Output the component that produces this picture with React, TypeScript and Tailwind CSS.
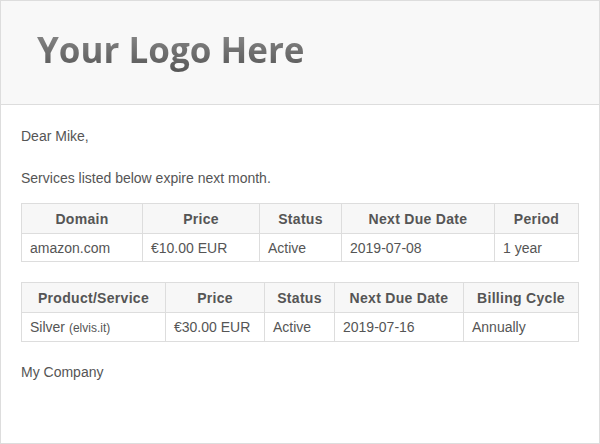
const cellBorder = "border border-[#dddddd]";

function DataTable({ widths, heads, cells, rowH }: { widths: number[]; heads: string[]; cells: React.ReactNode[]; rowH: string }) {
  return (
    <table className="w-[557px] table-fixed border-collapse text-[14px] leading-[20px] text-[#555555]">
      <colgroup>
        {widths.map((w, i) => (
          <col key={i} style={{ width: w }} />
        ))}
      </colgroup>
      <thead>
        <tr className="h-[30px] bg-[#f7f7f7]">
          {heads.map((h) => (
            <th key={h} className={`${cellBorder} p-0 text-center font-bold tracking-[0.3px] whitespace-nowrap`}>
              {h}
            </th>
          ))}
        </tr>
      </thead>
      <tbody>
        <tr className={rowH}>
          {cells.map((c, i) => (
            <td key={i} className={`${cellBorder} px-2 py-0 text-left whitespace-nowrap`}>
              {c}
            </td>
          ))}
        </tr>
      </tbody>
    </table>
  );
}

export default function App() {
  return (
    <div className="flex h-[444px] w-[600px] flex-col border border-[#dddddd] bg-white font-['Liberation_Sans',Arial,sans-serif] text-[14px] leading-[20px] text-[#555555]">
      <div className="flex h-[104px] shrink-0 items-start border-b border-[#dddddd] bg-[#f8f8f8] pl-[36px] pt-[26px]">
        <span className="bg-gradient-to-b from-[#8f8f8f] to-[#555555] bg-clip-text font-['Open_Sans',sans-serif] text-[35px] leading-[46px] font-bold text-transparent">
          Your Logo Here
        </span>
      </div>
      <div className="flex flex-col pl-[20px] pt-[21px]">
        <p>Dear Mike,</p>
        <p className="mt-[22px]">Services listed below expire next month.</p>
        <div className="mt-[15px]">
          <DataTable
            widths={[121, 117, 82, 153, 84]}
            heads={["Domain", "Price", "Status", "Next Due Date", "Period"]}
            cells={["amazon.com", "€10.00 EUR", "Active", "2019-07-08", "1 year"]}
            rowH="h-[28px]"
          />
        </div>
        <div className="mt-[20px]">
          <DataTable
            widths={[144, 99, 70, 129, 115]}
            heads={["Product/Service", "Price", "Status", "Next Due Date", "Billing Cycle"]}
            cells={[
              <>
                Silver <span className="text-[12px]">(elvis.it)</span>
              </>,
              "€30.00 EUR",
              "Active",
              "2019-07-16",
              "Annually",
            ]}
            rowH="h-[29px]"
          />
        </div>
        <p className="mt-[20px]">My Company</p>
      </div>
    </div>
  );
}
